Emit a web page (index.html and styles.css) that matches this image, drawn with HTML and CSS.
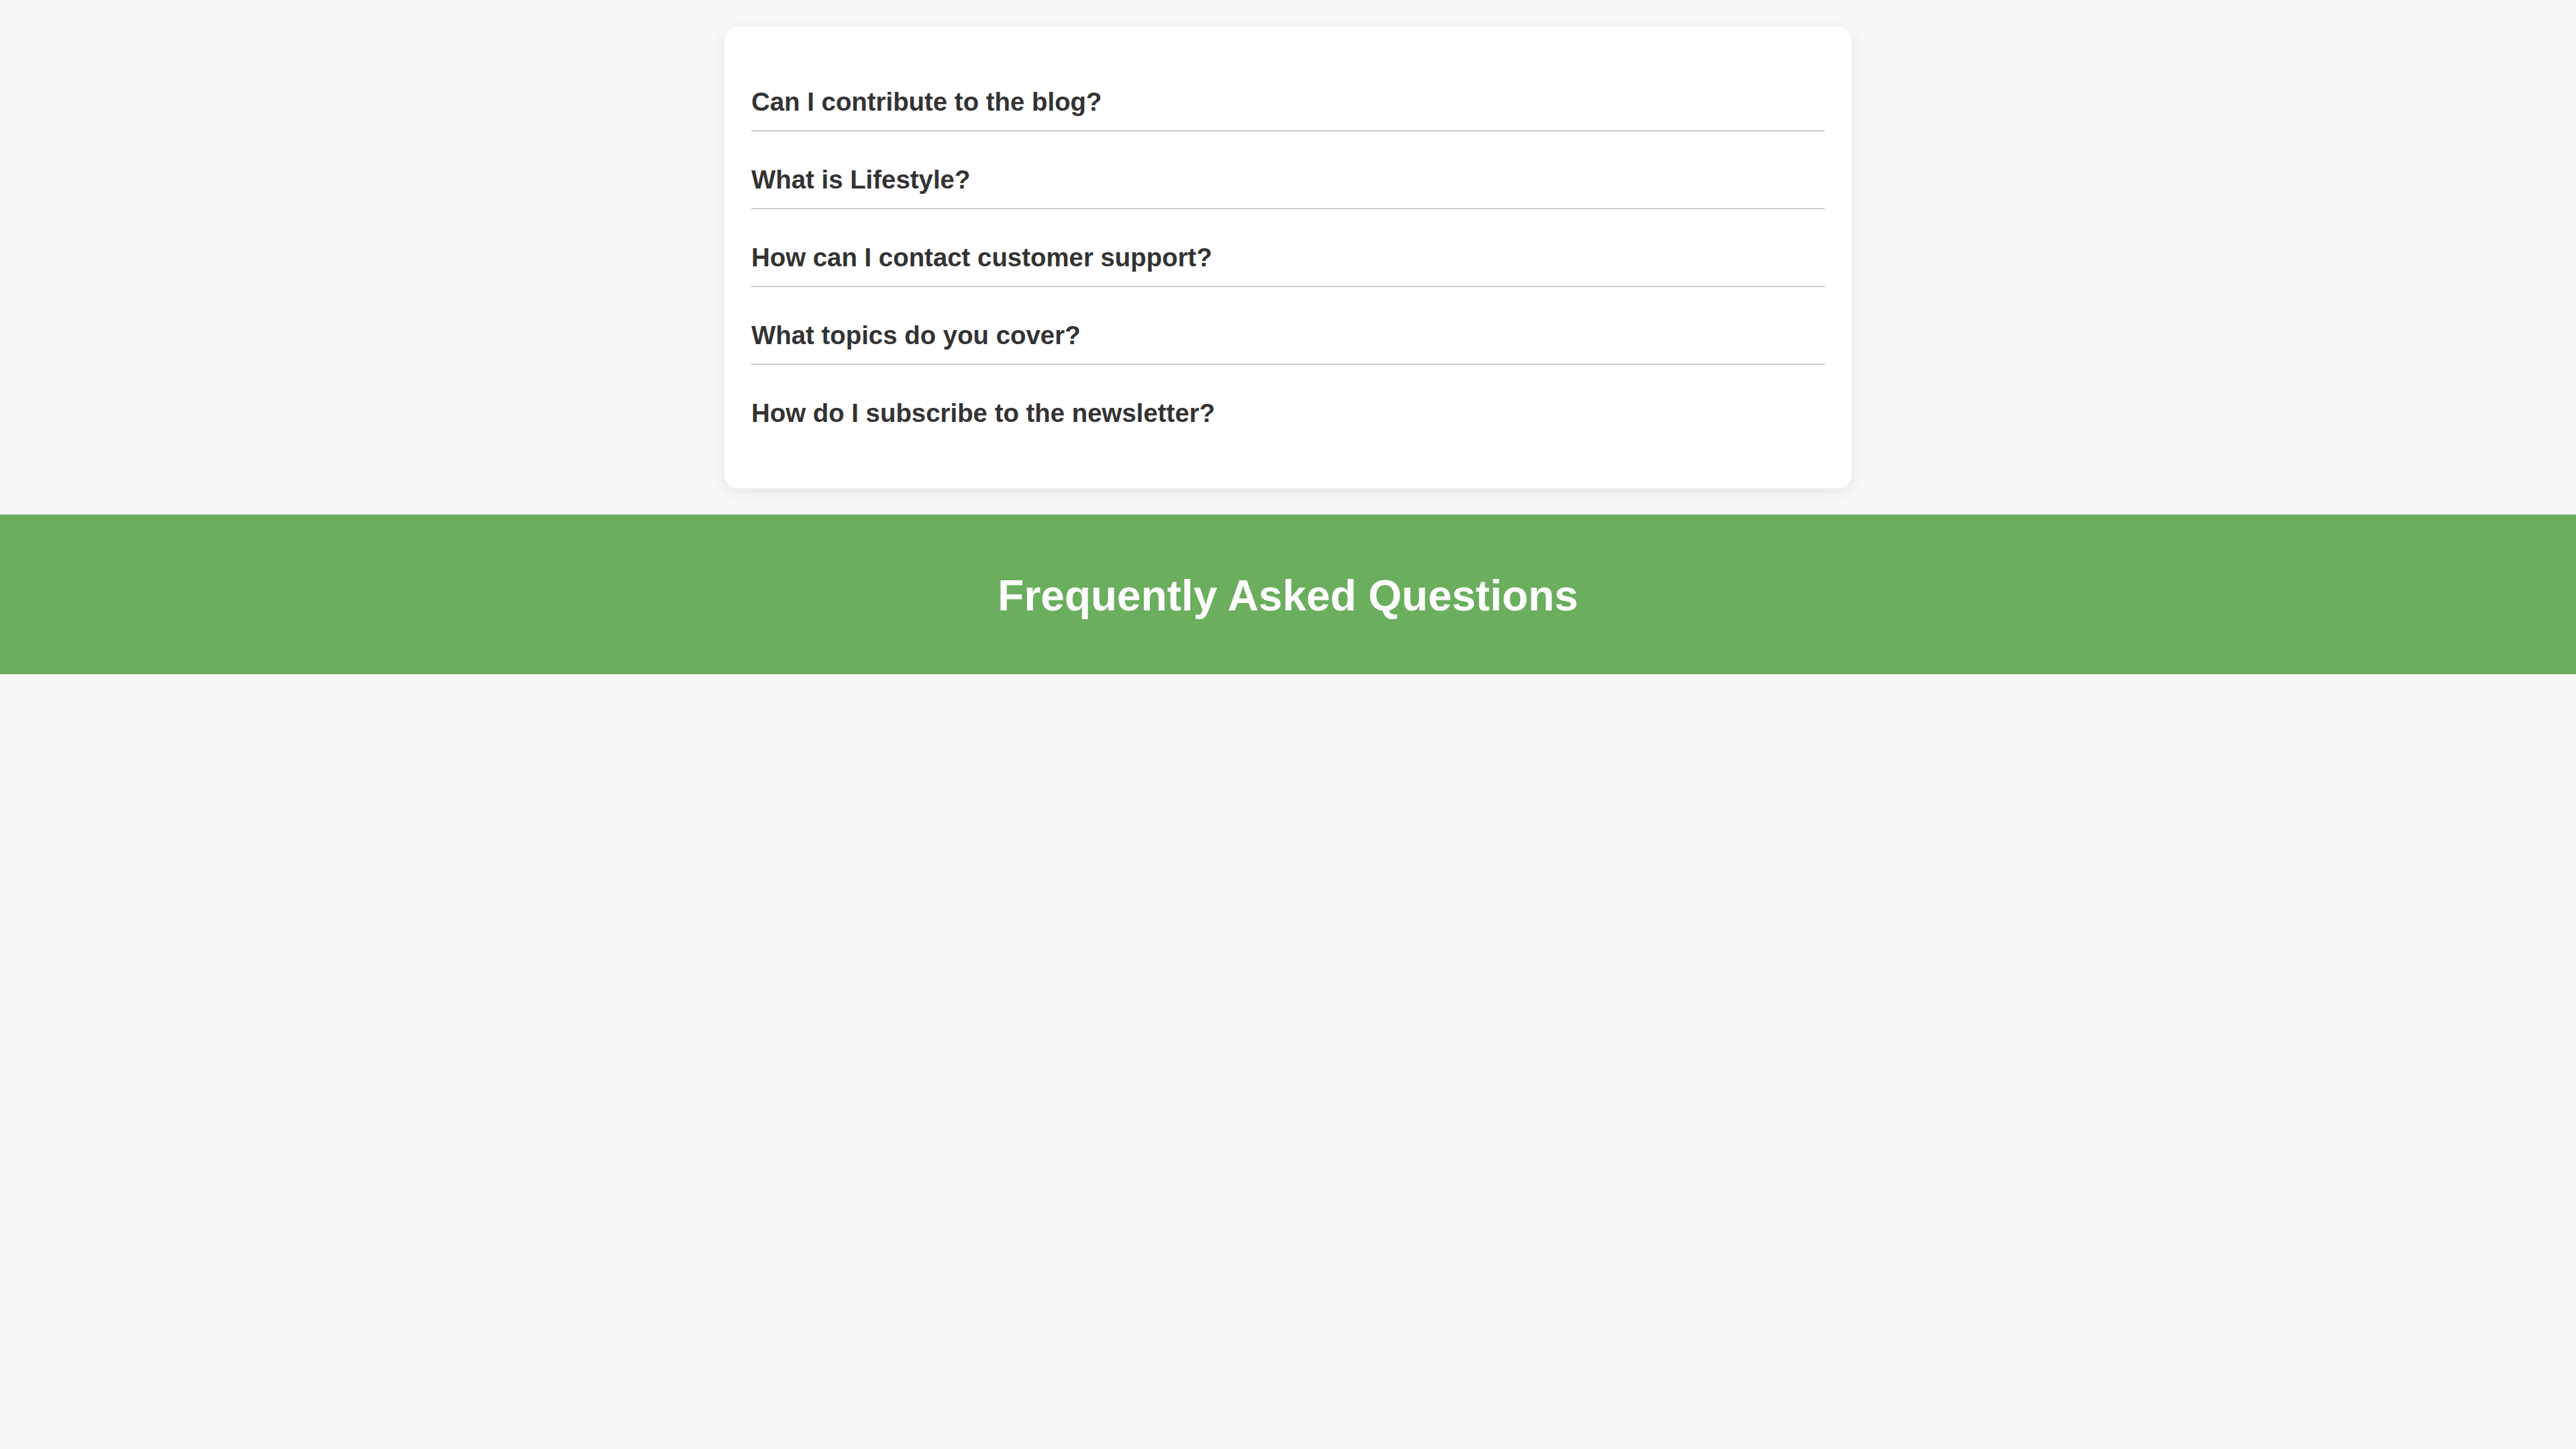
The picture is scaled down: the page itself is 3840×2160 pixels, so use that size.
FILE: index.html
```html
<!DOCTYPE html>
<html lang="en">
<head>
<meta charset="utf-8">
<title>FAQ</title>
<link rel="stylesheet" href="styles.css">
</head>
<body>
<main class="page">
  <section class="faq-card">
    <div class="faq-item"><h3 class="faq-question">Can I contribute to the blog?</h3></div>
    <div class="faq-item"><h3 class="faq-question">What is Lifestyle?</h3></div>
    <div class="faq-item"><h3 class="faq-question">How can I contact customer support?</h3></div>
    <div class="faq-item"><h3 class="faq-question">What topics do you cover?</h3></div>
    <div class="faq-item"><h3 class="faq-question">How do I subscribe to the newsletter?</h3></div>
  </section>
</main>
<header class="banner">
  <h1 class="banner-title">Frequently Asked Questions</h1>
</header>
</body>
</html>
```
FILE: styles.css
```css
html, body {
  margin: 0;
  padding: 0;
}
body {
  background: #f8f8f8;
  font-family: "Liberation Sans", Arial, sans-serif;
  color: #333;
}
.page {
  padding-top: 40px;
}
.faq-card {
  width: 1680px;
  box-sizing: border-box;
  margin: 0 auto;
  background: #fff;
  border-radius: 20px;
  padding: 40px;
  box-shadow: 0 5px 25px rgba(0, 0, 0, 0.08);
}
.faq-item {
  padding: 50px 0 20px;
  border-bottom: 2px solid #ccc;
}
.faq-item:last-child {
  border-bottom: none;
  padding-bottom: 50px;
}
.faq-question {
  margin: 0;
  font-size: 38.4px;
  line-height: 44px;
  font-weight: bold;
  color: #333;
}
.banner {
  margin-top: 39px;
  background: #6aae5e;
  padding: 84px 0 80px;
  text-align: center;
}
.banner-title {
  margin: 0;
  font-size: 64px;
  line-height: 74px;
  font-weight: bold;
  color: #fff;
}
```
